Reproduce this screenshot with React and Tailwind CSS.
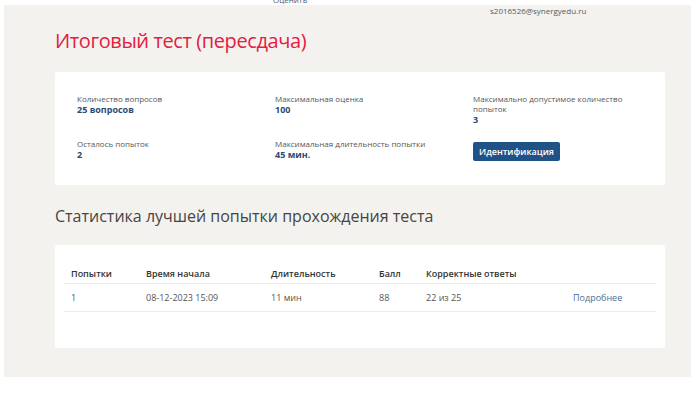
export default function App() {
  const font = { fontFamily: '"Open Sans", "Noto Sans", sans-serif' };
  return (
    <div className="w-[700px] h-[394px] bg-white overflow-hidden" style={font}>
      <div className="ml-[4px] mt-[5px] w-[687px] h-[372px] bg-[#f3f2ef] pl-[51px] pr-[26px] flex flex-col">
        <div className="h-[8px] relative text-[8px] leading-[9px] text-[#5a5a5a]">
          <span className="absolute left-[218px] -top-[10px] text-[#4a5a78]">Оценить</span>
          <span className="absolute left-[435px] top-[1px]">s2016526@synergyedu.ru</span>
        </div>
        <h1 className="mt-[16px] text-[20px] leading-[24px] text-[#e3203f] font-normal tracking-[-0.4px]">
          Итоговый тест (пересдача)
        </h1>
        <div className="mt-[19px] h-[113px] bg-white rounded-[2px] pl-[22px] pt-[22px] grid grid-cols-[198px_198px_1fr] grid-rows-[45px_1fr]">
          <div>
            <div className="text-[8px] leading-[10px] text-[#555]">Количество вопросов</div>
            <div className="text-[9px] leading-[11px] font-bold text-[#2b4a70]">25 вопросов</div>
          </div>
          <div>
            <div className="text-[8px] leading-[10px] text-[#555]">Максимальная оценка</div>
            <div className="text-[9px] leading-[11px] font-bold text-[#2b4a70]">100</div>
          </div>
          <div className="max-w-[150px]">
            <div className="text-[8px] leading-[10px] text-[#555]">Максимально допустимое количество попыток</div>
            <div className="text-[9px] leading-[11px] font-bold text-[#2b4a70]">3</div>
          </div>
          <div>
            <div className="text-[8px] leading-[10px] text-[#555]">Осталось попыток</div>
            <div className="text-[9px] leading-[11px] font-bold text-[#2b4a70]">2</div>
          </div>
          <div>
            <div className="text-[8px] leading-[10px] text-[#555]">Максимальная длительность попытки</div>
            <div className="text-[9px] leading-[11px] font-bold text-[#2b4a70]">45 мин.</div>
          </div>
          <div className="-mt-[2px]">
            <button className="h-[19px] w-[87px] bg-[#1f5387] rounded-[2px] text-white text-[9px] font-semibold leading-[19px]">
              Идентификация
            </button>
          </div>
        </div>
        <h2 className="mt-[20px] text-[16px] leading-[22px] text-[#454545] font-normal tracking-[0px]">
          Статистика лучшей попытки прохождения теста
        </h2>
        <div className="mt-[18px] h-[103px] bg-white rounded-[2px] px-[9px] pt-[20px]">
          <div className="grid grid-cols-[75px_125px_108px_47px_147px_1fr] text-[9px] leading-[12px] font-semibold text-[#333] h-[19px] items-center border-b border-[#ececec]">
            <div className="pl-[7px]">Попытки</div>
            <div className="pl-[7px]">Время начала</div>
            <div className="pl-[7px]">Длительность</div>
            <div className="pl-[7px]">Балл</div>
            <div className="pl-[7px]">Корректные ответы</div>
            <div></div>
          </div>
          <div className="grid grid-cols-[75px_125px_108px_47px_147px_1fr] text-[9px] leading-[12px] text-[#555] h-[28px] items-center border-b border-[#ececec]">
            <div className="pl-[7px]">1</div>
            <div className="pl-[7px]">08-12-2023 15:09</div>
            <div className="pl-[7px]">11 мин</div>
            <div className="pl-[7px]">88</div>
            <div className="pl-[7px]">22 из 25</div>
            <div className="pl-[7px] text-[#4a6f96]">Подробнее</div>
          </div>
        </div>
      </div>
    </div>
  );
}
